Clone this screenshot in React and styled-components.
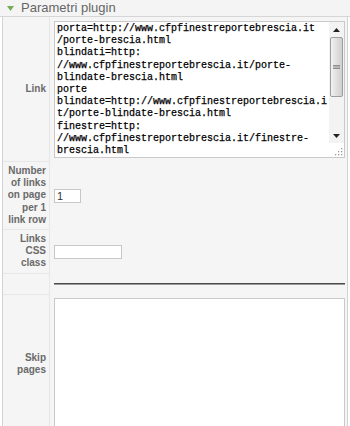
import React from 'react';
import styled, { createGlobalStyle } from 'styled-components';

const GlobalStyle = createGlobalStyle`
  html, body { margin: 0; padding: 0; background: #fff; }
  body {
    font-family: "Liberation Sans", Arial, sans-serif;
    width: 350px;
    height: 426px;
    overflow: hidden;
  }
`;

const Panel = styled.section`
  width: 350px;
`;

const Header = styled.h3`
  margin: 0;
  height: 16px;
  display: flex;
  align-items: center;
  gap: 7px;
  padding-left: 7px;
  background: #f4f4f4;
  border-bottom: 1px solid #d6d6d6;
  font: normal 13px/16px "Liberation Sans", Arial, sans-serif;
  color: #666;
`;

const Body = styled.div`
  margin: 0 2px;
  border-left: 1px solid #d2d2d2;
  border-right: 1px solid #d2d2d2;
  background: #f5f5f5;
`;

const Row = styled.div`
  display: flex;
`;

const Key = styled.div`
  box-sizing: border-box;
  width: 47px;
  flex: none;
  display: flex;
  align-items: center;
  justify-content: flex-end;
  text-align: right;
  padding: 3px;
  border-right: 1px solid #e7e7e7;
  border-bottom: 1px solid #e7e7e7;
  font: bold 10px/12.2px "Liberation Sans", Arial, sans-serif;
  color: #6a6a6a;
`;

const Value = styled.div`
  flex: 1;
  min-width: 0;
  display: flex;
  align-items: center;
  padding: ${p => p.$pad || '3px 2px 3px 4px'};
`;

const CodeBox = styled.div`
  box-sizing: border-box;
  flex: 1;
  height: 137px;
  display: flex;
  background: #fff;
  border: 1px solid #c9c9c9;
`;

const CodeArea = styled.textarea`
  flex: 1;
  min-width: 0;
  margin: 0;
  border: 0;
  outline: none;
  resize: none;
  overflow: hidden;
  white-space: pre;
  padding: 1px 0 0 2px;
  background: transparent;
  font: normal 10px/12.2px "Liberation Mono", "Courier New", monospace;
  color: #000;
  -webkit-text-stroke: 0.25px #000;
`;

const ScrollColumn = styled.div`
  width: 15px;
  flex: none;
  display: flex;
  flex-direction: column;
  background: #f3f3f3;
`;

const ScrollButton = styled.div`
  height: 15px;
  flex: none;
  display: flex;
  align-items: center;
  justify-content: center;
`;

const Track = styled.div`
  flex: 1;
  display: flex;
  flex-direction: column;
  padding: 0 1px;
`;

const Thumb = styled.div`
  height: 60px;
  box-sizing: border-box;
  border: 1px solid #9d9d9d;
  border-radius: 2px;
  background: linear-gradient(to right, #f2f2f2, #dcdcdc 60%, #cfcfcf);
  display: flex;
  align-items: center;
  justify-content: center;
`;

const Corner = styled.div`
  height: 13px;
  flex: none;
  display: flex;
  align-items: flex-end;
  justify-content: flex-end;
  background: #fff;
  padding: 0 1px 1px 0;
`;

const SmallInput = styled.input`
  box-sizing: border-box;
  width: ${p => p.$w}px;
  height: 14px;
  margin: 0;
  padding: 0 2px;
  border: 1px solid #c8c8c8;
  background: #fff;
  font: normal 11px/12px "Liberation Sans", Arial, sans-serif;
  color: #333;
  outline: none;
`;

const Divider = styled.div`
  flex: 1;
  height: 1px;
  margin: 6px 0 7px;
  background: #4a4a4a;
  border-bottom: 1px solid #9a9a9a;
`;

const PlainArea = styled.textarea`
  box-sizing: border-box;
  flex: 1;
  min-width: 0;
  height: 134px;
  margin: 0;
  border: 1px solid #c9c9c9;
  background: #fff;
  resize: none;
  outline: none;
  font: normal 10px/12.2px "Liberation Mono", "Courier New", monospace;
`;

const linkText = [
  'porta=http://www.cfpfinestreportebrescia.it',
  '/porte-brescia.html',
  'blindati=http:',
  '//www.cfpfinestreportebrescia.it/porte-',
  'blindate-brescia.html',
  'porte',
  'blindate=http://www.cfpfinestreportebrescia.i',
  't/porte-blindate-brescia.html',
  'finestre=http:',
  '//www.cfpfinestreportebrescia.it/finestre-',
  'brescia.html',
].join('\n');

const Arrow = ({ down }) => (
  <svg width="7" height="4" viewBox="0 0 7 4">
    {down ? <path d="M0 0h7L3.5 4z" fill="#222" /> : <path d="M0 4h7L3.5 0z" fill="#222" />}
  </svg>
);

const Grip = () => (
  <svg width="7" height="4" viewBox="0 0 7 4">
    <path d="M0 0.5h7M0 2h7M0 3.5h7" stroke="#7a7a7a" strokeWidth="0.8" />
  </svg>
);

const ResizeDots = () => (
  <svg width="8" height="8" viewBox="0 0 8 8" fill="#9a9a9a">
    <rect x="6" y="0" width="1.3" height="1.3" />
    <rect x="3" y="3" width="1.3" height="1.3" />
    <rect x="6" y="3" width="1.3" height="1.3" />
    <rect x="0" y="6" width="1.3" height="1.3" />
    <rect x="3" y="6" width="1.3" height="1.3" />
    <rect x="6" y="6" width="1.3" height="1.3" />
  </svg>
);

const Toggle = () => (
  <svg width="7" height="5" viewBox="0 0 7 5">
    <path d="M0 0h7L3.5 5z" fill="#76ad52" />
  </svg>
);

export default function App() {
  return (
    <>
      <GlobalStyle />
      <Panel>
        <Header>
          <Toggle />
          <span>Parametri plugin</span>
        </Header>
        <Body>
          <Row>
            <Key>Link</Key>
            <Value $pad="4px 2px 4px 4px">
              <CodeBox>
                <CodeArea readOnly wrap="off" value={linkText} />
                <ScrollColumn>
                  <ScrollButton><Arrow /></ScrollButton>
                  <Track>
                    <Thumb><Grip /></Thumb>
                  </Track>
                  <ScrollButton><Arrow down /></ScrollButton>
                  <Corner><ResizeDots /></Corner>
                </ScrollColumn>
              </CodeBox>
            </Value>
          </Row>
          <Row>
            <Key>Number of links on page per 1 link row</Key>
            <Value>
              <SmallInput $w={27} defaultValue="1" />
            </Value>
          </Row>
          <Row>
            <Key>Links CSS class</Key>
            <Value>
              <SmallInput $w={68} defaultValue="" />
            </Value>
          </Row>
          <Row>
            <Key />
            <Value>
              <Divider />
            </Value>
          </Row>
          <Row>
            <Key>Skip pages</Key>
            <Value>
              <PlainArea defaultValue="" />
            </Value>
          </Row>
        </Body>
      </Panel>
    </>
  );
}
